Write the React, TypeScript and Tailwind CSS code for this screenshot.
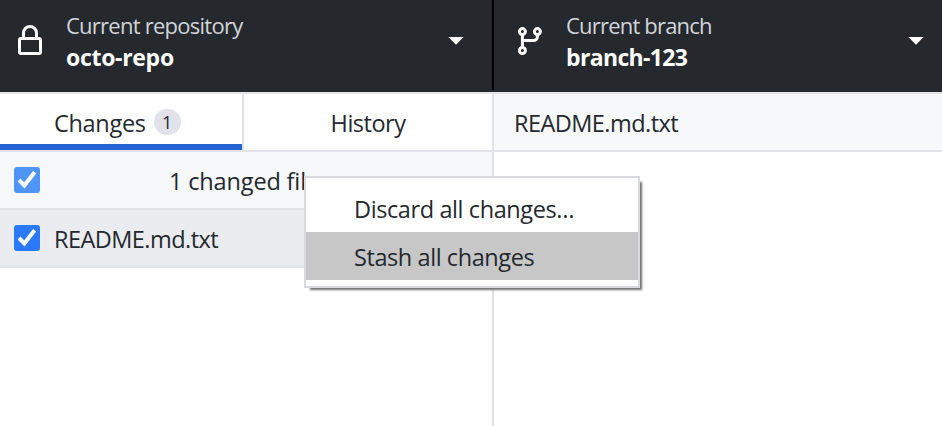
import type { ReactNode } from 'react';

function LockIcon() {
  return (
    <svg width="26" height="32" viewBox="0 0 26 32" fill="none" stroke="#fff" strokeWidth="3" className="shrink-0">
      <rect x="2.5" y="14.5" width="21" height="15" rx="1.5" />
      <path d="M6.5 14.5V9a6.5 6.5 0 0 1 13 0v5.5" />
    </svg>
  );
}

function BranchIcon() {
  return (
    <svg width="26" height="32" viewBox="0 0 26 32" fill="none" stroke="#fff" strokeWidth="3" className="shrink-0">
      <circle cx="5.4" cy="7.6" r="3" />
      <circle cx="20.4" cy="7.6" r="3" />
      <circle cx="5.4" cy="26.5" r="3" />
      <path d="M5.4 10.5v13M20.4 10.5v2a4 4 0 0 1-4 4H5.4" />
    </svg>
  );
}

function Caret() {
  return (
    <svg width="16" height="8" viewBox="0 0 16 8" className="mt-0.5 shrink-0">
      <path d="M0.4 0h15.2L8 7.8z" fill="#fff" />
    </svg>
  );
}

function ToolbarButton({ icon, title, value }: { icon: ReactNode; title: ReactNode; value: ReactNode }) {
  return (
    <>
      {icon}
      <div className="ml-[23px] flex-1 pt-0.5 text-[22px]">
        <div className="h-8 leading-8 text-[#d1d5da]">{title}</div>
        <div className="h-8 text-[23px] font-bold leading-8 text-white">{value}</div>
      </div>
      <Caret />
    </>
  );
}

function Checkbox({ label, className }: { label: string; className: string }) {
  return (
    <span role="checkbox" aria-checked="true" aria-label={label} className={`block size-[26px] shrink-0 rounded-[3px] ${className}`}>
      <svg width="26" height="26" viewBox="0 0 26 26" fill="none" stroke="#fff" strokeWidth="4">
        <path d="M5 13l5.4 5.5L20.6 5.2" />
      </svg>
    </span>
  );
}

export default function App() {
  return (
    <div className="relative flex h-[426px] w-[942px] flex-col overflow-hidden bg-white font-['Open_Sans','Noto_Sans',sans-serif] text-[23.5px] whitespace-nowrap text-[#24292e]">
      <header className="flex h-[94px] shrink-0 border-b-2 border-[#e2e4e7] bg-[#25292e]">
        <div className="flex w-[492px] items-center pr-7 pl-[17px] pb-3">
          <ToolbarButton
            icon={<LockIcon />}
            title={<span className="tracking-[-0.75px]">Current repository</span>}
            value={<span className="tracking-[-0.3px]">octo-repo</span>}
          />
        </div>
        <div className="h-[90px] w-0.5 bg-black" />
        <div className="flex flex-1 items-center pr-[18px] pl-[23px] pb-3">
          <ToolbarButton
            icon={<BranchIcon />}
            title={<span className="tracking-[-0.8px]">Current branch</span>}
            value={<span className="tracking-[-0.65px]">branch-123</span>}
          />
        </div>
      </header>
      <div className="flex flex-1">
        <aside className="w-[494px] border-r-2 border-[#e1e2e7]">
          <nav className="flex h-[58px] border-b-2 border-[#e1e2e7]">
            <div className="flex w-[242px] items-center border-b-[6px] border-[#2464d2] pl-[54px] pt-2.5">
              <span className="tracking-[-0.3px]">Changes</span>
              <span className="mb-[5px] ml-[8px] flex h-[26px] w-[27px] items-center justify-center rounded-full bg-[#e1e3e8] pt-0.5 text-[18px]">1</span>
            </div>
            <div className="flex flex-1 items-center justify-center border-l-2 border-[#e1e2e7] pt-1">
              <span className="tracking-[-0.5px]">History</span>
            </div>
          </nav>
          <div className="flex h-[58px] items-center border-b-2 border-[#e1e2e7] bg-[#f6f8fa] pl-3.5">
            <Checkbox label="All files" className="bg-[#4f95f8]" />
            <span className="ml-[129px] pt-1 tracking-[-0.15px]">1 changed file</span>
          </div>
          <div className="flex h-[58px] items-center border-b-2 border-[#e1e2e7] bg-[#ebecf0] pl-3.5">
            <Checkbox label="README.md.txt" className="bg-[#2b79fb]" />
            <span className="ml-3.5 pt-1 tracking-[-0.55px]">README.md.txt</span>
          </div>
        </aside>
        <main className="flex-1">
          <div className="flex h-[58px] items-center border-b-2 border-[#e1e2e7] bg-[#f6f8fa] pt-1 pl-5">
            <span className="tracking-[-0.55px]">README.md.txt</span>
          </div>
        </main>
      </div>
      <div role="menu" className="absolute top-[176px] left-[304px] h-[112px] w-[336px] border-2 border-[#d9dade] bg-white pt-1.5 shadow-[4px_4px_2px_-2px_#707070]">
        <div role="menuitem" className="flex h-12 items-center pt-1 pl-12">
          <span className="tracking-[-0.4px]">Discard all changes…</span>
        </div>
        <div role="menuitem" className="flex h-12 items-center bg-[#c7c7c7] pt-1 pl-12">
          <span className="tracking-[-0.42px]">Stash all changes</span>
        </div>
      </div>
    </div>
  );
}
